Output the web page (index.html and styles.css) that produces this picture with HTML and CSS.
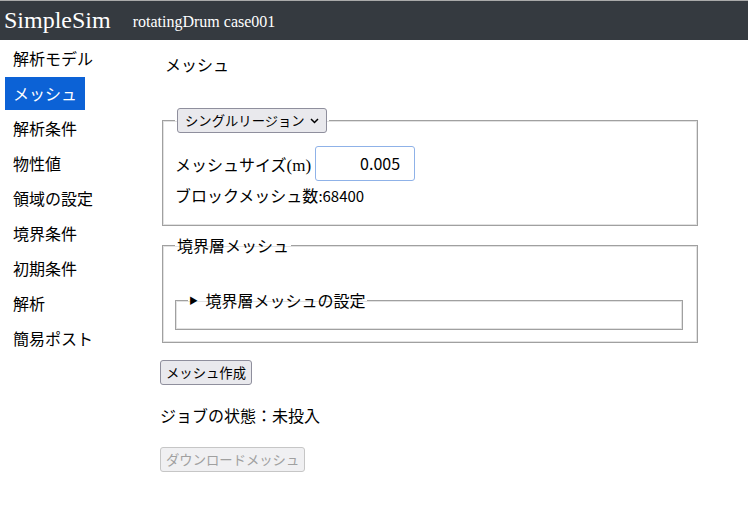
FILE: index.html
```html
<!DOCTYPE html>
<html lang="ja">
<head>
<meta charset="utf-8">
<link rel="stylesheet" href="styles.css">
</head>
<body>
<header class="topbar">
  <span class="brand">SimpleSim</span>
  <span class="case">rotatingDrum case001</span>
</header>
<div class="layout">
  <nav class="sidebar">
    <a class="nav-item">解析モデル</a>
    <a class="nav-item active">メッシュ</a>
    <a class="nav-item">解析条件</a>
    <a class="nav-item">物性値</a>
    <a class="nav-item">領域の設定</a>
    <a class="nav-item">境界条件</a>
    <a class="nav-item">初期条件</a>
    <a class="nav-item">解析</a>
    <a class="nav-item">簡易ポスト</a>
  </nav>
  <main class="main">
    <h2 class="title">メッシュ</h2>
    <fieldset class="box box-region">
      <legend class="legend-select"><span class="select"><span>シングルリージョン</span><svg class="chev" width="9" height="6" viewBox="0 0 9 6"><path d="M1 1 L4.5 4.5 L8 1" fill="none" stroke="#000" stroke-width="1.5"/></svg></span></legend>
      <div class="row">
        <span class="label">メッシュサイズ<span class="unit">(m)</span></span>
        <span class="input">0.005</span>
      </div>
      <div class="count">ブロックメッシュ数<span class="num">:68400</span></div>
    </fieldset>
    <fieldset class="box box-bl">
      <legend class="legend-text">境界層メッシュ</legend>
      <fieldset class="inner">
        <legend class="legend-inner"><span class="tri">&#9654;</span> 境界層メッシュの設定</legend>
      </fieldset>
    </fieldset>
    <button class="btn">メッシュ作成</button>
    <p class="status">ジョブの状態：未投入</p>
    <button class="btn disabled" disabled>ダウンロードメッシュ</button>
  </main>
</div>
</body>
</html>
```
FILE: styles.css
```css
html, body {
  margin: 0;
  padding: 0;
  background: #fff;
  font-family: "Noto Sans CJK JP", "Noto Sans", sans-serif;
  color: #000;
}
.topbar {
  height: 40px;
  background: #353a40;
  border-top: 1px solid #aaa;
  box-sizing: border-box;
  display: flex;
  align-items: center;
  color: #fff;
  font-family: "Liberation Serif", serif;
}
.brand {
  font-size: 24px;
  margin-left: 4px;
  margin-right: 22px;
}
.case {
  font-size: 16px;
  padding-top: 2px;
}
.layout {
  display: flex;
}
.sidebar {
  width: 155px;
  padding: 2px 0 0 5px;
  box-sizing: border-box;
  display: flex;
  flex-direction: column;
  align-items: flex-start;
}
.nav-item {
  display: block;
  height: 33px;
  line-height: 33px;
  margin-bottom: 2px;
  padding: 0 8px;
  font-size: 16px;
  color: #000;
}
.nav-item.active {
  background: #0c62d6;
  color: #fff;
}
.main {
  width: 540px;
  padding-left: 5px;
}
.title {
  margin: 12px 0 0 5px;
  font-size: 16px;
  font-weight: normal;
  line-height: 24px;
}
.box {
  margin: 0 2px;
  border: 1px solid #a0a0a0;
  box-shadow: inset 0 0 0 1px #e2e2e2;
  padding: 0 12px 10px 12px;
}
.box-region {
  margin-top: 32px;
  padding-top: 13px;
  padding-bottom: 17px;
}
.legend-select {
  padding: 0 2px;
}
.select {
  display: flex;
  align-items: center;
  justify-content: space-between;
  width: 150px;
  height: 25px;
  box-sizing: border-box;
  padding: 0 7px 0 7px;
  border: 1px solid #8f8f9d;
  border-radius: 3px;
  background: #e9e9ed;
  font-size: 13.33px;
}
.chev { margin-top: 1px; }
.row {
  display: flex;
  align-items: center;
}
.label {
  font-size: 16px;
}
.unit {
  font-family: "Liberation Serif", serif;
  font-size: 17px;
}
.input {
  display: inline-block;
  width: 100px;
  height: 35px;
  box-sizing: border-box;
  margin-left: 4px;
  border: 1px solid #8fb2e8;
  border-radius: 3px;
  text-align: right;
  padding: 0 14px 0 0;
  line-height: 33px;
  font-size: 16px;
}
.count {
  font-size: 16px;
  margin-top: 2px;
  line-height: 24px;
}
.num {
  font-size: 15px;
}
.box-bl {
  margin-top: 7px;
  padding: 0 14px 12px 12px;
}
.legend-text {
  padding: 0 2px;
  font-size: 16px;
}
.inner {
  margin: 31px 0 0 0;
  border: 1px solid #a0a0a0;
  box-shadow: inset 0 0 0 1px #e2e2e2;
  padding: 0 12px 17px 12px;
}
.legend-inner {
  padding: 0 1px;
  font-size: 16px;
}
.tri {
  font-size: 9px;
  position: relative;
  top: -3px;
  margin-right: 4px;
}
.btn {
  display: block;
  margin: 17px 0 0 0;
  height: 25px;
  padding: 0 5px;
  font-family: "Noto Sans CJK JP", sans-serif;
  font-size: 13.33px;
  border: 1px solid #8f8f9d;
  border-radius: 3px;
  background: #e9e9ed;
  color: #000;
}
.status {
  margin: 18px 0 0 0;
  font-size: 16px;
  line-height: 24px;
}
.btn.disabled {
  margin-top: 20px;
  color: #a0a0a0;
  border-color: #c6c6c6;
  background: #f0f0f2;
}
```
